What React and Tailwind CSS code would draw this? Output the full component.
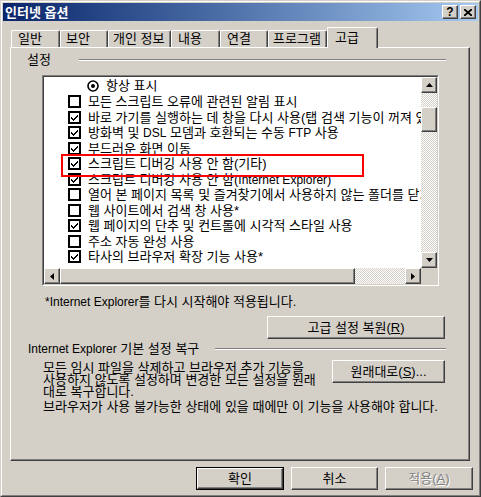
import React from 'react';

const raised =
  'border border-t-white border-l-white border-r-[#404040] border-b-[#404040] shadow-[inset_-1px_-1px_0_#808080] bg-[#d4d0c8]';

const tabs = [
  { label: '일반', w: 'w-[49px] ml-[1px] pl-[6px]' },
  { label: '보안', w: 'w-[48px] pl-[5px]' },
  { label: '개인 정보', w: 'w-[63px] pl-[4px]' },
  { label: '내용', w: 'w-[49px] pl-[6px]' },
  { label: '연결', w: 'w-[48px] pl-[6px]' },
  { label: '프로그램', w: 'w-[59px] pl-[4px]' },
];

const L = ({ children }) => <span className="text-[12px]">{children}</span>;

const rows = [
  { on: false, t: '모든 스크립트 오류에 관련된 알림 표시' },
  { on: true, t: '바로 가기를 실행하는 데 창을 다시 사용(탭 검색 기능이 꺼져 있을 때)' },
  {
    on: true,
    t: (
      <>
        방화벽 및 <L>DSL</L> 모뎀과 호환되는 수동 <L>FTP</L> 사용
      </>
    ),
  },
  { on: true, t: '부드러운 화면 이동' },
  { on: true, t: '스크립트 디버깅 사용 안 함(기타)' },
  {
    on: true,
    t: (
      <>
        스크립트 디버깅 사용 안 함(<L>Internet Explorer</L>)
      </>
    ),
  },
  { on: false, t: '열어 본 페이지 목록 및 즐겨찾기에서 사용하지 않는 폴더를 닫기' },
  { on: false, t: '웹 사이트에서 검색 창 사용*' },
  { on: true, t: '웹 페이지의 단추 및 컨트롤에 시각적 스타일 사용' },
  { on: false, t: '주소 자동 완성 사용' },
  { on: true, t: '타사의 브라우저 확장 기능 사용*' },
];

const Check = ({ on }) => (
  <svg width="13" height="13" viewBox="0 0 13 13" className="shrink-0" shapeRendering="crispEdges">
    <rect x="1" y="1" width="11" height="11" fill="#fff" stroke="#000" strokeWidth="2" />
    {on && <path d="M3 6 L5 8 L10 3 L10 5 L5 10 L3 8 Z" fill="#000" />}
  </svg>
);

const Radio = () => (
  <svg width="12" height="12" viewBox="0 0 12 12" className="shrink-0">
    <circle cx="6" cy="6" r="5" fill="#fff" stroke="#000" strokeWidth="1.6" />
    <circle cx="6" cy="6" r="2" fill="#000" />
  </svg>
);

const Arrow = ({ dir }) => {
  const d = {
    up: 'M3.5 0 L7 4 L0 4 Z',
    down: 'M0 0 L7 0 L3.5 4 Z',
    left: 'M4 0 L4 7 L0 3.5 Z',
    right: 'M0 0 L4 3.5 L0 7 Z',
  }[dir];
  const vertical = dir === 'up' || dir === 'down';
  return (
    <svg width={vertical ? 7 : 4} height={vertical ? 4 : 7} viewBox={vertical ? '0 0 7 4' : '0 0 4 7'}>
      <path d={d} fill="#000" />
    </svg>
  );
};

const checker =
  'bg-[image:repeating-conic-gradient(#d4d0c8_0%_25%,#ffffff_0%_50%)] bg-[length:2px_2px]';

const Button = ({ children, className }) => (
  <div className={`${raised} ${className} flex items-center justify-center`}>{children}</div>
);

export default function App() {
  return (
    <div className="relative w-[481px] h-[497px] overflow-hidden border border-t-[#d4d0c8] border-l-[#d4d0c8] border-r-[#404040] border-b-[#404040] bg-[#d4d0c8] font-['Liberation_Sans','Noto_Sans_CJK_KR',sans-serif] text-[13px] text-black">
      <div className="h-full border border-t-white border-l-white border-r-[#808080] border-b-[#808080] p-[1px]">
        {/* title bar */}
        <div className="h-[18px] flex items-center bg-gradient-to-r from-[#0a246a] to-[#a6caf0]">
          <span className="pl-[2px] text-white font-bold leading-none">인터넷 옵션</span>
          <div className="ml-auto mr-[2px] flex gap-[2px]">
            <div className={`${raised} w-[16px] h-[14px] flex items-center justify-center font-bold text-[12px] leading-none`}>?</div>
            <div className={`${raised} w-[16px] h-[14px] flex items-center justify-center`}>
              <svg width="8" height="7" viewBox="0 0 8 7">
                <path d="M0 0 L8 7 M8 0 L0 7" stroke="#000" strokeWidth="1.8" />
              </svg>
            </div>
          </div>
        </div>

        {/* tabs */}
        <div className="ml-[7px] h-[26px] flex items-end">
          {tabs.map((t) => (
            <div
              key={t.label}
              className={`${t.w} h-[17px] flex items-center whitespace-nowrap overflow-hidden border-t border-l border-r border-t-white border-l-white border-r-[#404040] rounded-t-[2px] shadow-[inset_-1px_0_0_#808080]`}
            >
              {t.label}
            </div>
          ))}
          <div className="relative z-10 w-[51px] h-[21px] -mb-px flex items-center pl-[7px] bg-[#d4d0c8] border-t border-l border-r border-t-white border-l-white border-r-[#404040] rounded-t-[2px] shadow-[inset_-1px_0_0_#808080]">
            고급
          </div>
        </div>

        {/* panel */}
        <div className="ml-[7px] w-[460px] h-[414px] border border-t-white border-l-white border-r-[#404040] border-b-[#404040] shadow-[inset_-1px_-1px_0_#808080]">
          <div className="mt-[5px] h-[14px] flex items-center">
            <span className="ml-[16px] w-[52px] leading-[14px]">설정</span>
            <div className="w-[367px] h-[2px] border-t border-b border-t-[#808080] border-b-white" />
          </div>

          {/* list box */}
          <div className="mt-[8px] ml-[31px] w-[397px] h-[211px] border border-t-[#808080] border-l-[#808080] border-r-white border-b-white">
            <div className="w-full h-full border border-t-[#404040] border-l-[#404040] border-r-[#d4d0c8] border-b-[#d4d0c8] bg-white grid grid-cols-[377px_16px] grid-rows-[191px_16px]">
              <div className="overflow-hidden whitespace-nowrap">
                <div className="h-[17px] flex items-center pl-[43px]">
                  <Radio />
                  <span className="ml-[7px]">항상 표시</span>
                </div>
                {rows.map((r, i) => (
                  <div key={i} className="h-[15.5px] flex items-center pl-[24px]">
                    <Check on={r.on} />
                    <span className="ml-[7px]">{r.t}</span>
                  </div>
                ))}
              </div>

              {/* vertical scrollbar */}
              <div className="flex flex-col">
                <div className={`${raised} h-[16px] flex items-center justify-center`}>
                  <Arrow dir="up" />
                </div>
                <div className={`h-[14px] ${checker}`} />
                <div className={`${raised} h-[25px]`} />
                <div className={`flex-1 ${checker}`} />
                <div className={`${raised} h-[16px] flex items-center justify-center`}>
                  <Arrow dir="down" />
                </div>
              </div>

              {/* horizontal scrollbar */}
              <div className="flex">
                <div className={`${raised} w-[16px] flex items-center justify-center`}>
                  <Arrow dir="left" />
                </div>
                <div className={`${raised} w-[295px]`} />
                <div className={`flex-1 ${checker}`} />
                <div className={`${raised} w-[16px] flex items-center justify-center`}>
                  <Arrow dir="right" />
                </div>
              </div>
              <div className="bg-[#d4d0c8]" />
            </div>
          </div>

          <div className="mt-[9px] ml-[34px] h-[14px] leading-[14px] whitespace-nowrap">
            <L>*Internet Explorer</L>를 다시 시작해야 적용됩니다.
          </div>

          <Button className="mt-[7px] ml-[256px] w-[178px] h-[23px]">
            <span>
              고급 설정 복원(<u>R</u>)
            </span>
          </Button>

          <div className="mt-[3px] h-[14px] flex items-center">
            <span className="ml-[17px] w-[187px] leading-[14px] whitespace-nowrap">
              <L>Internet Explorer</L> 기본 설정 복구
            </span>
            <div className="w-[231px] h-[2px] border-t border-b border-t-[#808080] border-b-white" />
          </div>

          <div className="mt-[4px] flex items-start">
            <div className="ml-[32px] w-[289px] pt-[2px] leading-[12px] whitespace-nowrap">
              모든 임시 파일을 삭제하고 브라우저 추가 기능을
              <br />
              사용하지 않도록 설정하며 변경한 모든 설정을 원래
              <br />
              대로 복구합니다.
            </div>
            <Button className="w-[113px] h-[23px]">
              <span>
                원래대로(<u>S</u>)...
              </span>
            </Button>
          </div>

          <div className="mt-[3px] ml-[32px] leading-[12px] whitespace-nowrap">
            브라우저가 사용 불가능한 상태에 있을 때에만 이 기능을 사용해야 합니다.
          </div>
        </div>

        {/* dialog buttons */}
        <div className="mt-[6px] flex justify-end gap-[7px] pr-[5px]">
          <div className="w-[88px] h-[23px] border border-black">
            <Button className="w-full h-full">확인</Button>
          </div>
          <Button className="w-[87px] h-[23px]">취소</Button>
          <Button className="w-[88px] h-[23px] text-[#808080] [text-shadow:1px_1px_0_#ffffff]">
            <span>
              적용(<u>A</u>)
            </span>
          </Button>
        </div>
      </div>

      {/* annotation highlight */}
      <div className="absolute left-[60px] top-[153px] w-[303px] h-[23px] border-2 border-[#ff0000] pointer-events-none" />
    </div>
  );
}
